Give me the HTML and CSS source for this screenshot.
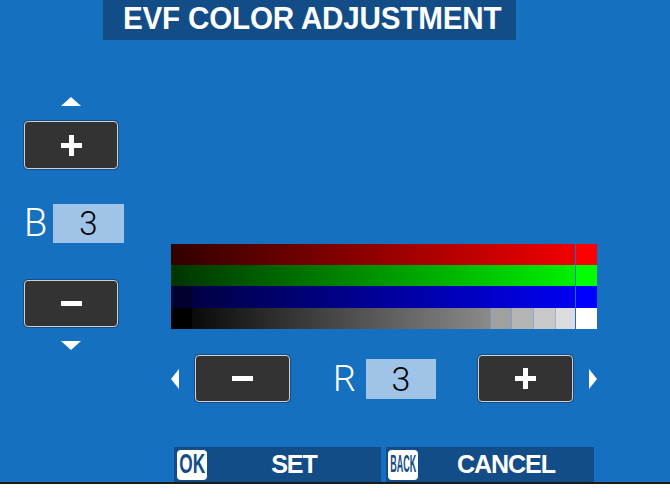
FILE: index.html
```html
<!DOCTYPE html>
<html>
<head>
<meta charset="utf-8">
<link rel="stylesheet" href="styles.css">
</head>
<body>
<div class="screen">
  <div class="title"><span class="title-text">EVF COLOR ADJUSTMENT</span></div>
  <div class="main">
    <div class="left">
      <div class="tri up"></div>
      <div class="btn tall">
        <svg width="21" height="21" viewBox="0 0 21 21"><rect x="8" y="0" width="5" height="21" fill="#fff"/><rect x="0" y="8" width="21" height="5" fill="#fff"/></svg>
      </div>
      <div class="val-row">
        <span class="lbl b">B</span>
        <span class="val">3</span>
      </div>
      <div class="btn short">
        <svg width="21" height="5" viewBox="0 0 21 5"><rect x="0" y="0" width="21" height="5" fill="#fff"/></svg>
      </div>
      <div class="tri down"></div>
    </div>
    <div class="right">
      <div class="bars">
        <div class="row r1"><div class="grad red"></div><div class="sw sw-red"></div></div>
        <div class="row r2"><div class="grad green"></div><div class="sw sw-green"></div></div>
        <div class="row r3"><div class="blk blk-blue"></div><div class="grad blue"></div><div class="sw sw-blue"></div></div>
        <div class="row r4">
          <div class="blk blk-gray"></div>
          <div class="grad gray"></div>
          <div class="step s1"></div>
          <div class="step s2"></div>
          <div class="step s3"></div>
          <div class="step s4"></div>
          <div class="sw sw-white"></div>
        </div>
      </div>
      <div class="controls">
        <div class="tri left-a"></div>
        <div class="btn wide minus-btn">
          <svg width="21" height="5" viewBox="0 0 21 5"><rect x="0" y="0" width="21" height="5" fill="#fff"/></svg>
        </div>
        <span class="lbl r">R</span>
        <span class="val rval">3</span>
        <div class="btn wide plus-btn">
          <svg width="21" height="21" viewBox="0 0 21 21"><rect x="8" y="0" width="5" height="21" fill="#fff"/><rect x="0" y="8" width="21" height="5" fill="#fff"/></svg>
        </div>
        <div class="tri right-a"></div>
      </div>
    </div>
  </div>
  <div class="footer">
    <div class="fbar set">
      <span class="icon"><span class="ok">OK</span></span>
      <span class="ftext">SET</span>
    </div>
    <div class="fbar cancel">
      <span class="icon"><span class="back">BACK</span></span>
      <span class="ftext">CANCEL</span>
    </div>
  </div>
</div>
</body>
</html>
```

FILE: styles.css
```css
html, body {
  margin: 0;
  padding: 0;
  background: #ffffff;
}
body {
  font-family: "Liberation Sans", Arial, sans-serif;
}
.screen {
  width: 670px;
  height: 482px;
  background: #1570c0;
  border-bottom: 2px solid #1b1b1b;
  display: flex;
  flex-direction: column;
  overflow: hidden;
}
.title {
  margin-left: 103px;
  width: 393px;
  height: 40px;
  padding-left: 20px;
  background: #134d87;
  color: #fff;
  font-weight: bold;
  font-size: 31px;
  line-height: 37px;
  white-space: nowrap;
  flex: none;
}
.title-text {
  display: inline-block;
  transform: scaleX(0.955);
  transform-origin: left center;
  letter-spacing: -0.2px;
}
.main {
  height: 407px;
  display: flex;
  flex: none;
}
.left {
  width: 100px;
  margin-left: 24px;
  display: flex;
  flex-direction: column;
  align-items: flex-start;
}
.tri {
  width: 0;
  height: 0;
  flex: none;
}
.tri.up {
  margin-top: 57px;
  margin-left: 37px;
  border-left: 10px solid transparent;
  border-right: 10px solid transparent;
  border-bottom: 9px solid #fff;
}
.tri.down {
  margin-top: 14px;
  margin-left: 37px;
  border-left: 10px solid transparent;
  border-right: 10px solid transparent;
  border-top: 9px solid #fff;
}
.btn {
  box-sizing: border-box;
  background: #333333;
  border: 1px solid #d0d0d0;
  box-shadow: 0 0 0 1px rgba(20, 40, 70, 0.45);
  border-radius: 4px;
  display: flex;
  align-items: center;
  justify-content: center;
  flex: none;
}
.btn svg { display: block; }
.btn.tall {
  margin-top: 15px;
  width: 94px;
  height: 48px;
}
.btn.short {
  margin-top: 37px;
  width: 94px;
  height: 47px;
}
.val-row {
  margin-top: 35px;
  height: 39px;
  display: flex;
  align-items: center;
}
.lbl {
  font-family: Roboto, "Liberation Sans", sans-serif;
  font-weight: 300;
  color: #fff;
  font-size: 38px;
  line-height: 39px;
}
.lbl.b {
  width: 29px;
}
.val {
  width: 71px;
  height: 39px;
  background: #a0c4e8;
  color: #000;
  font-family: Roboto, "Liberation Sans", sans-serif;
  font-weight: 300;
  font-size: 33px;
  line-height: 39px;
  text-align: center;
}
.right {
  margin-left: 47px;
  width: 426px;
  display: flex;
  flex-direction: column;
}
.bars {
  margin-top: 204px;
  width: 426px;
  display: flex;
  flex-direction: column;
}
.row {
  display: flex;
  height: 21px;
}
.row.r3 { height: 22px; }
.grad { flex: 1; }
.grad.red { background: linear-gradient(to right, #320000, #f00000); }
.grad.green { background: linear-gradient(to right, #003400, #00f000); }
.grad.blue { background: linear-gradient(to right, #000044, #0000f0); }
.grad.gray { flex: none; width: 298px; background: linear-gradient(to right, #0a0a0a, #8a8a8a); }
.blk { width: 21px; flex: none; }
.blk-blue { background: #000030; }
.blk-gray { background: #000000; }
.sw { width: 21px; margin-left: 1px; flex: none; }
.sw-red { background: #ff0000; }
.sw-green { background: #00ff00; }
.sw-blue { background: #0000ff; }
.sw-white { background: #ffffff; }
.step { flex: none; box-sizing: border-box; border-left: 1px solid rgba(80, 140, 210, 0.5); }
.s1 { width: 21px; background: #a0a0a0; }
.s2 { width: 22px; background: #b4b4b4; }
.s3 { width: 22px; background: #c8c8c8; }
.s4 { width: 20px; background: #dcdcdc; }
.controls {
  margin-top: 26px;
  height: 47px;
  display: flex;
  align-items: center;
}
.tri.left-a {
  border-top: 10px solid transparent;
  border-bottom: 10px solid transparent;
  border-right: 8px solid #fff;
}
.tri.right-a {
  margin-left: 16px;
  border-top: 10px solid transparent;
  border-bottom: 10px solid transparent;
  border-left: 8px solid #fff;
}
.btn.wide {
  width: 95px;
  height: 47px;
}
.minus-btn { margin-left: 16px; }
.plus-btn { margin-left: 42px; width: 94px; }
.lbl.r {
  margin-left: 43px;
  width: 33px;
  font-size: 36px;
  line-height: 40px;
}
.rval {
  height: 40px;
  line-height: 40px;
  font-size: 34px;
}
.footer {
  height: 35px;
  padding-left: 174px;
  display: flex;
  gap: 5px;
  flex: none;
}
.fbar {
  background: #134d87;
  display: flex;
  align-items: center;
  padding-left: 3px;
  box-sizing: border-box;
}
.fbar.set { width: 207px; }
.fbar.cancel { width: 208px; padding-left: 2px; }
.icon {
  width: 30px;
  height: 30px;
  background: #fff;
  border-radius: 4px;
  display: flex;
  align-items: center;
  justify-content: center;
  overflow: hidden;
  flex: none;
}
.ok, .back {
  color: #134d87;
  font-weight: bold;
  display: inline-block;
  white-space: nowrap;
}
.ok {
  font-size: 27px;
  transform: scaleX(0.64);
}
.back {
  font-size: 23px;
  transform: scaleX(0.39);
}
.ftext {
  flex: 1;
  text-align: center;
  color: #fff;
  font-weight: bold;
  font-size: 25px;
  letter-spacing: -1px;
}
```
